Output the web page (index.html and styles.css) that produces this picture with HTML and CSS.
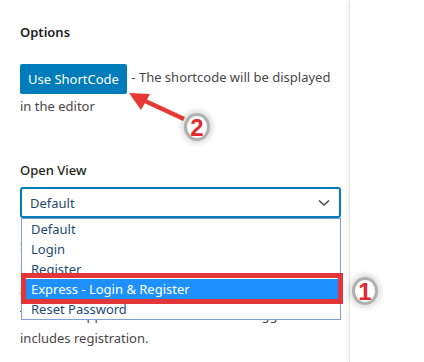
FILE: index.html
```html
<!DOCTYPE html>
<html>
<head>
<meta charset="utf-8">
<link rel="stylesheet" href="styles.css">
</head>
<body>
<div class="panel">
  <h3 class="title">Options</h3>
  <p class="shortcode"><button class="btn">Use ShortCode</button> - The shortcode will be displayed in the editor</p>

  <div class="field">
    <label class="label">Open View</label>
    <div class="select-wrap">
      <div class="select">
        <span>Default</span>
        <svg class="chev" width="12" height="8" viewBox="0 0 12 8"><path d="M1 1.5 L6 6 L11 1.5" fill="none" stroke="#4f4545" stroke-width="1.6"/></svg>
      </div>
      <p class="help">Select which form view is shown first on the<br>page when the block loads. The Express<br>option shows the login form with a link<br>The form appears with one button to toggle that<br>includes registration.</p>
      <ul class="list">
        <li>Default</li>
        <li>Login</li>
        <li>Register</li>
        <li class="active">Express - Login &amp; Register</li>
        <li>Reset Password</li>
      </ul>
      <div class="mark-box"></div>
    </div>
  </div>

  <svg class="arrow" width="349" height="362" viewBox="0 0 349 362">
    <line x1="184" y1="119" x2="144" y2="100.5" stroke="#e53935" stroke-width="4.5"/>
    <polygon points="129,93 150,94 141,110" fill="#e53935"/>
  </svg>
  <div class="badge b2">2</div>
  <div class="badge b1">1</div>
</div>
<div class="side"></div>
</body>
</html>
```

FILE: styles.css
```css
html, body {
  margin: 0;
  padding: 0;
  background: #fff;
}
body {
  display: flex;
  width: 424px;
  height: 362px;
  overflow: hidden;
  font-family: "Noto Sans", "Open Sans", sans-serif;
  font-size: 13px;
  color: #4a4548;
}
.panel {
  position: relative;
  width: 349px;
  box-sizing: border-box;
  padding: 22px 8px 0 20px;
}
.side {
  flex: 1;
  border-left: 1px solid #e4e4e4;
  box-shadow: -2px 0 3px rgba(0,0,0,0.05);
}
.title {
  margin: 0;
  font-size: 13px;
  font-weight: 600;
  line-height: 20px;
  color: #1e1e1e;
}
.shortcode {
  margin: 22px 0 0;
  line-height: 24px;
}
.btn {
  display: inline-block;
  vertical-align: middle;
  height: 30px;
  padding: 0 8px;
  margin-right: 1px;
  border: none;
  border-radius: 2px;
  background: #007cba;
  color: #fff;
  font-family: inherit;
  font-size: 13px;
}
.field {
  margin-top: 42px;
}
.label {
  display: block;
  font-size: 13px;
  font-weight: 500;
  line-height: 20px;
  color: #1e1e1e;
}
.select-wrap {
  position: relative;
  margin-top: 7px;
}
.select {
  height: 31px;
  box-sizing: border-box;
  border: 2px solid #007cba;
  border-radius: 3px;
  display: flex;
  align-items: center;
  justify-content: space-between;
  padding: 0 9px 0 8px;
  color: #23466b;
}
.help {
  margin: 17px 0 0;
  line-height: 23px;
}
.list {
  position: absolute;
  left: 1px;
  top: 31px;
  width: 320px;
  box-sizing: border-box;
  margin: 0;
  padding: 0;
  list-style: none;
  background: #fff;
  border: 1px solid #7f9fd8;
  color: #1d4a72;
}
.list li {
  height: 20px;
  line-height: 20px;
  padding-left: 9px;
}
.list li.active {
  background: #1e90ff;
  color: #fff;
}
.mark-box {
  position: absolute;
  left: 1px;
  top: 86px;
  width: 322px;
  height: 31px;
  box-sizing: border-box;
  border: 5px solid #e3363a;
}
.arrow {
  position: absolute;
  left: 0;
  top: 0;
  pointer-events: none;
}
.badge {
  position: absolute;
  width: 20px;
  height: 22px;
  border-radius: 50%;
  background: #fff;
  border: 3px solid #b0b0b0;
  box-shadow: 0 0 5px 3px rgba(0,0,0,0.13);
  color: #e3282e;
  font-family: "Liberation Sans", Arial, sans-serif;
  font-weight: bold;
  font-size: 24px;
  line-height: 23px;
  text-align: center;
}
.b2 {
  left: 184px;
  top: 113px;
}
.b1 {
  left: 352px;
  top: 277px;
}
```
